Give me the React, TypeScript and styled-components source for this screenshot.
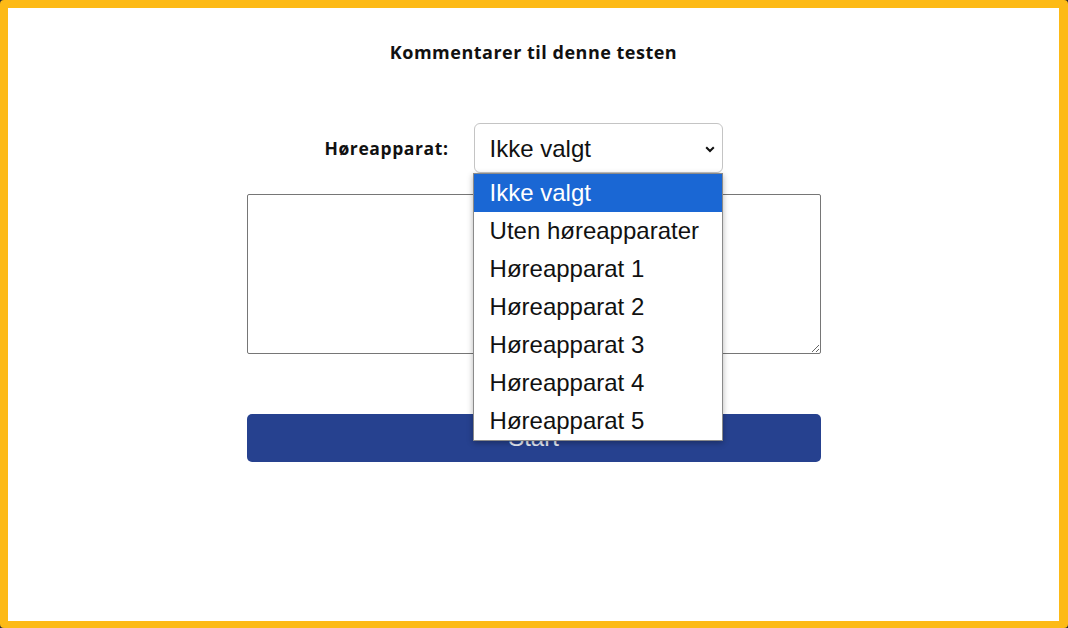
import React from "react";
import styled, { createGlobalStyle } from "styled-components";

const Global = createGlobalStyle`
  html, body { margin: 0; padding: 0; background: #2b2b2b; }
  body { font-family: "Liberation Sans", Arial, sans-serif; }
  * { box-sizing: border-box; }
`;

const Frame = styled.div`
  width: 1068px;
  height: 628px;
  border: 8px solid #fdba16;
  border-right-width: 9px;
  border-bottom-width: 7px;
  border-radius: 4px;
  background: #ffffff;
  display: flex;
  flex-direction: column;
  align-items: center;
`;

const Title = styled.h2`
  margin: 33px 0 0;
  font-family: "Open Sans", sans-serif;
  font-weight: 700;
  font-size: 18px;
  letter-spacing: 0.5px;
  line-height: 22px;
  color: #111;
`;

const Column = styled.div`
  width: 574px;
  margin-top: 60px;
  display: flex;
  flex-direction: column;
`;

const Row = styled.div`
  display: flex;
  justify-content: center;
  align-items: center;
  gap: 25px;
`;

const Label = styled.label`
  font-family: "Open Sans", sans-serif;
  font-weight: 700;
  font-size: 17.5px;
  letter-spacing: 0.6px;
  color: #111;
`;

const SelectWrap = styled.div`
  position: relative;
  margin-right: 20px;
`;

const SelectBox = styled.div`
  width: 249px;
  height: 50px;
  border: 1px solid #c4c4c4;
  border-radius: 6px;
  background: #fff;
  display: flex;
  align-items: center;
  justify-content: space-between;
  padding: 2px 7px 0 15px;
  font-size: 24px;
  color: #111;
`;

const Menu = styled.ul`
  position: absolute;
  top: 50px;
  left: -1px;
  width: 250px;
  margin: 0;
  padding: 0;
  list-style: none;
  background: #fff;
  border: 1px solid #8a8a8a;
  box-shadow: 0 2px 6px rgba(0, 0, 0, 0.3);
  z-index: 2;
`;

const Option = styled.li<{ $active?: boolean }>`
  height: 38px;
  display: flex;
  align-items: center;
  padding-left: 16px;
  font-size: 24px;
  color: ${(p) => (p.$active ? "#ffffff" : "#111")};
  background: ${(p) => (p.$active ? "#1a67d4" : "transparent")};
`;

const TextArea = styled.textarea`
  margin-top: 21px;
  width: 574px;
  height: 160px;
  border: 1px solid #767676;
  border-radius: 2px;
  resize: vertical;
  font-family: inherit;
`;

const StartButton = styled.button`
  margin-top: 60px;
  height: 48px;
  border: none;
  border-radius: 5px;
  background: #26418f;
  color: #e8ecf6;
  font-family: "Liberation Sans", Arial, sans-serif;
  font-size: 24px;
`;

const options = [
  "Ikke valgt",
  "Uten høreapparater",
  "Høreapparat 1",
  "Høreapparat 2",
  "Høreapparat 3",
  "Høreapparat 4",
  "Høreapparat 5",
];

export default function App() {
  return (
    <>
      <Global />
      <Frame>
        <Title>Kommentarer til denne testen</Title>
        <Column>
          <Row>
            <Label>Høreapparat:</Label>
            <SelectWrap>
              <SelectBox>
                <span>Ikke valgt</span>
                <svg width="10" height="7" viewBox="0 0 10 7">
                  <path d="M1.2 1.2 L5 5 L8.8 1.2" fill="none" stroke="#111" strokeWidth="2" />
                </svg>
              </SelectBox>
              <Menu>
                {options.map((o, i) => (
                  <Option key={o} $active={i === 0}>
                    {o}
                  </Option>
                ))}
              </Menu>
            </SelectWrap>
          </Row>
          <TextArea />
          <StartButton>Start</StartButton>
        </Column>
      </Frame>
    </>
  );
}
